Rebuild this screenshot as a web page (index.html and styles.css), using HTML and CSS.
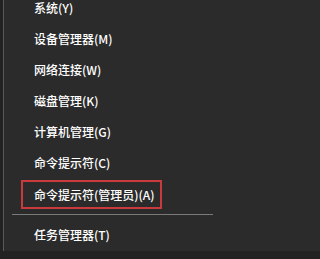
FILE: index.html
```html
<!DOCTYPE html>
<html lang="zh-CN">
<head>
<meta charset="utf-8">
<title>Win+X 菜单</title>
<link rel="stylesheet" href="styles.css">
</head>
<body>
<div class="menu">
  <ul class="list">
    <li class="item">系统(Y)</li>
    <li class="item">设备管理器(M)</li>
    <li class="item">网络连接(W)</li>
    <li class="item">磁盘管理(K)</li>
    <li class="item">计算机管理(G)</li>
    <li class="item">命令提示符(C)</li>
    <li class="item marked">命令提示符(管理员)(A)</li>
    <li class="sep"></li>
    <li class="item">任务管理器(T)</li>
    <li class="item">控制面板(P)</li>
  </ul>
</div>
</body>
</html>
```

FILE: styles.css
```css
html, body {
  margin: 0;
  padding: 0;
  height: 100%;
  background: #222222;
  overflow: hidden;
}

.menu {
  margin-left: 3px;
  height: 100%;
  border-left: 1px solid #5a5a5a;
  background: #2b2b2b;
  font-family: "Noto Sans CJK SC", "Microsoft YaHei", sans-serif;
  font-size: 12px;
  font-weight: 500;
  color: #ffffff;
}

.list {
  list-style: none;
  margin: -8px 0 0 0;
  padding: 0;
}

.item {
  height: 31px;
  display: flex;
  align-items: center;
  padding-left: 30px;
  white-space: nowrap;
  line-height: 1;
}

.item.marked {
  box-sizing: border-box;
  height: 29px;
  margin-top: 2px;
  margin-left: 17px;
  width: 141px;
  padding-left: 11px;
  border: 2px solid #c93a3c;
}

.sep {
  height: 1px;
  margin: 5px 0 4px 8px;
  width: 201px;
  background: #7a7a7a;
}
```
